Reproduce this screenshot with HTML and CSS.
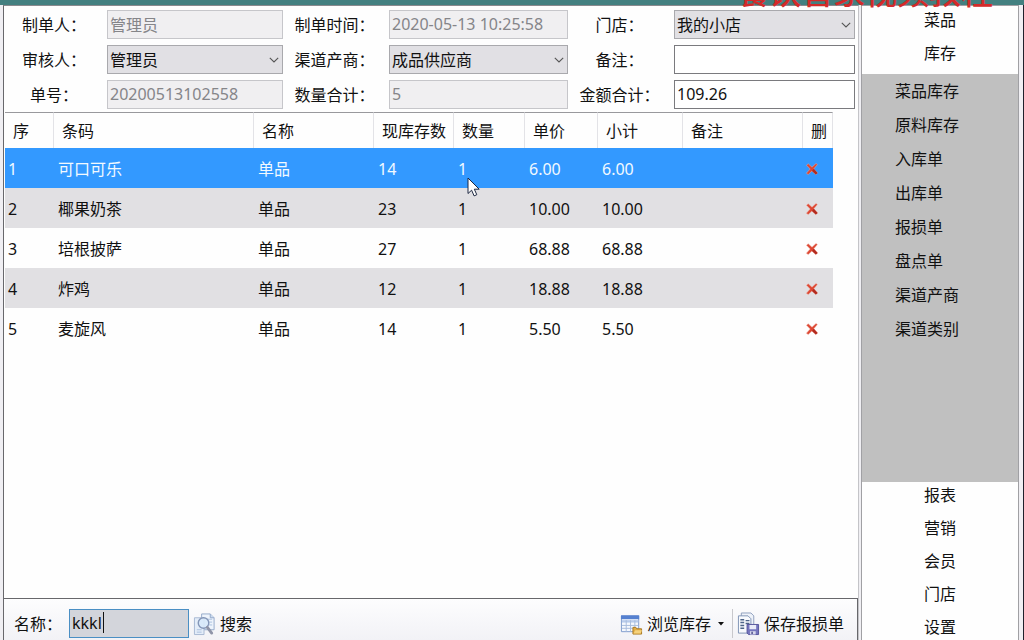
FILE: index.html
```html
<!DOCTYPE html>
<html lang="zh-CN">
<head>
<meta charset="utf-8">
<meta name="viewport" content="width=device-width, initial-scale=1">
<title>报损单</title>
<link rel="stylesheet" href="styles.css">
</head>
<body>
<svg class="defs" aria-hidden="true">
  <symbol id="cross" viewBox="0 0 14 14">
    <path d="M1.5 3.2 3.2 1.8 7 5.2 11 1.5 12.4 2.6 8.8 6.8 12.6 11 10.8 12.6 7 9 3.2 12.5 1.4 11.2 5.2 7Z" fill="#dc4632" stroke="#f0a89a" stroke-width=".5"/>
    <path d="M8.8 6.8 12.6 11 10.8 12.6 7 9Z" fill="#b32c20"/>
  </symbol>
  <symbol id="chevron" viewBox="0 0 10 6">
    <path d="M.8.8 5 5 9.2.8" fill="none" stroke="#555" stroke-width="1.1"/>
  </symbol>
</svg>
<div class="app">
  <header class="titlebar"><span class="watermark">餐饮管家视频教程</span></header>
  <div class="body">
    <main class="workspace">
      <form class="form">
        <label for="maker">制单人：</label>
        <input class="field" id="maker" value="管理员" disabled>
        <label for="time">制单时间：</label>
        <input class="field" id="time" value="2020-05-13 10:25:58" disabled>
        <label for="store">门店：</label>
        <div class="select"><select class="field" id="store"><option>我的小店</option></select><svg class="chevron"><use href="#chevron"/></svg></div>

        <label for="auditor">审核人：</label>
        <div class="select"><select class="field" id="auditor"><option>管理员</option></select><svg class="chevron"><use href="#chevron"/></svg></div>
        <label for="supplier">渠道产商：</label>
        <div class="select"><select class="field" id="supplier"><option>成品供应商</option></select><svg class="chevron"><use href="#chevron"/></svg></div>
        <label for="remark">备注：</label>
        <input class="field" id="remark">

        <label for="number">单号：</label>
        <input class="field" id="number" value="20200513102558" disabled>
        <label for="count">数量合计：</label>
        <input class="field" id="count" value="5" disabled>
        <label for="amount">金额合计：</label>
        <input class="field" id="amount" value="109.26">
      </form>

      <div class="list">
        <table class="grid">
          <colgroup><col class="c-no"><col class="c-code"><col class="c-name"><col class="c-stock"><col class="c-qty"><col class="c-price"><col class="c-sum"><col class="c-note"><col class="c-del"></colgroup>
          <thead><tr><th>序</th><th>条码</th><th>名称</th><th>现库存数</th><th>数量</th><th>单价</th><th>小计</th><th>备注</th><th>删</th></tr></thead>
          <tbody>
            <tr class="selected"><td>1</td><td>可口可乐</td><td>单品</td><td>14</td><td>1</td><td>6.00</td><td>6.00</td><td></td><td><button class="del" aria-label="删除"><svg><use href="#cross"/></svg></button></td></tr>
            <tr><td>2</td><td>椰果奶茶</td><td>单品</td><td>23</td><td>1</td><td>10.00</td><td>10.00</td><td></td><td><button class="del" aria-label="删除"><svg><use href="#cross"/></svg></button></td></tr>
            <tr><td>3</td><td>培根披萨</td><td>单品</td><td>27</td><td>1</td><td>68.88</td><td>68.88</td><td></td><td><button class="del" aria-label="删除"><svg><use href="#cross"/></svg></button></td></tr>
            <tr><td>4</td><td>炸鸡</td><td>单品</td><td>12</td><td>1</td><td>18.88</td><td>18.88</td><td></td><td><button class="del" aria-label="删除"><svg><use href="#cross"/></svg></button></td></tr>
            <tr><td>5</td><td>麦旋风</td><td>单品</td><td>14</td><td>1</td><td>5.50</td><td>5.50</td><td></td><td><button class="del" aria-label="删除"><svg><use href="#cross"/></svg></button></td></tr>
          </tbody>
        </table>
      </div>

      <footer class="toolbar">
        <label for="search">名称：</label>
        <div class="search"><input id="search" value="kkkl"><span class="caret"></span></div>
        <button class="tool">
          <svg class="icon" viewBox="0 0 24 24">
            <path d="M9 1.5h9l4 4V18H9Z" fill="#eef4fc" stroke="#93a9ca"/>
            <path d="M18 1.5v4h4" fill="#cddcf0" stroke="#93a9ca"/>
            <path d="M1.5 5.500h10V23H1.500Z" fill="#e3ecf8" stroke="#a7b8d2"/>
            <path d="M4 18h5M4 20.500h5M15 7h5M17 10h3M17 13h3" stroke="#a9bfdf"/>
            <circle cx="11" cy="11" r="5.500" fill="#d7e9fa" fill-opacity=".9" stroke="#8496b8" stroke-width="1.500"/>
            <path d="m15 15.500 4.500 6" stroke="#8f94a8" stroke-width="3" stroke-linecap="round"/>
          </svg>
          <span>搜索</span>
        </button>
        <span class="spacer"></span>
        <button class="tool">
          <svg class="icon" viewBox="0 0 24 24">
            <path d="M1.500 3.500h18V20h-18Z" fill="#f5f8fd" stroke="#7f9bcc"/>
            <path d="M1 3h19v4H1Z" fill="#5580d0"/>
            <path d="M2 8h17v2.500H2Z" fill="#b7cbeb"/>
            <path d="M2 13.500h17M2 16.500h17M6.500 8v12M11 8v12M15.500 8v12" stroke="#a8bcdc"/>
            <path d="M13.500 22.500v-7h3l1 1.500h5v5.500Z" fill="#e2ad45" stroke="#a87822"/>
            <path d="m14 22 2-3.500h7L21.500 22Z" fill="#f5d27d"/>
          </svg>
          <span>浏览库存</span>
          <svg class="arrow" viewBox="0 0 6 4"><path d="M0 0h6L3 3.500Z" fill="#111"/></svg>
        </button>
        <span class="divider"></span>
        <button class="tool">
          <svg class="icon" viewBox="0 0 24 24">
            <path d="M4.500.500h10l3 3V18h-13Z" fill="#eef2f9" stroke="#8d9ebc"/>
            <path d="M1.500 3.500h10l3 3V21.500h-13Z" fill="#f7f9fd" stroke="#7f93b5"/>
            <path d="M3.500 7.500h4M3.500 10.500h4M3.500 13.500h4M3.500 16.500h4M9 8.500h4M9 11.500h4" stroke="#4d6488" stroke-width="1.500"/>
            <path d="M10.500 12.500h12v10.500H12l-1.500-1.500Z" fill="#7474bd" stroke="#55559c"/>
            <path d="M13 13h7v4.500h-7Z" fill="#e9ebf8"/>
            <path d="M13.500 19.500h6V23h-6Z" fill="#d6d7ec"/>
            <path d="M15 20h1.500v2.500H15Z" fill="#4b4b8a"/>
          </svg>
          <span>保存报损单</span>
        </button>
      </footer>
    </main>

    <nav class="sidebar">
      <div class="group top"><button>菜品</button><button>库存</button></div>
      <div class="submenu">
        <button>菜品库存</button><button>原料库存</button><button>入库单</button><button>出库单</button><button>报损单</button><button>盘点单</button><button>渠道产商</button><button>渠道类别</button>
      </div>
      <div class="group bottom"><button>报表</button><button>营销</button><button>会员</button><button>门店</button><button>设置</button></div>
    </nav>
  </div>
  <svg class="cursor" viewBox="0 0 13 20"><path d="M1 1v15.500l3.600-3.300 2.500 5.700 2.700-1.200-2.500-5.500h4.900Z" fill="#fff" stroke="#1c2740"/></svg>
</div>
</body>
</html>
```
FILE: styles.css
```css
* {
  box-sizing: border-box;
}

body {
  margin: 0;
  background: #fefefe;
  color: #111;
}

body,
button,
input,
select {
  font-family: "Noto Sans", "Noto Sans CJK SC", sans-serif;
  font-size: 16px;
  line-height: 24px;
}

button {
  padding: 0;
  border: 0;
  background: none;
  color: inherit;
}

.defs {
  position: absolute;
  width: 0;
  height: 0;
}

.app {
  position: relative;
  display: flex;
  flex-direction: column;
  height: 100vh;
  overflow: hidden;
}

.titlebar {
  position: relative;
  flex: none;
  height: 5px;
  background: #438080;
}

.watermark {
  position: absolute;
  z-index: 1;
  right: 31px;
  bottom: -1px;
  color: #d42a2a;
  font-family: "Noto Sans CJK SC", sans-serif;
  font-size: 32px;
  font-weight: 500;
  line-height: 32px;
  white-space: nowrap;
}

.body {
  display: flex;
  flex: 1;
  min-height: 0;
  padding-left: 3px;
  border-right: 1px solid #20202c;
  background: #f0eff3;
}

/* Document area */

.workspace {
  display: flex;
  flex: 1;
  flex-direction: column;
  min-width: 0;
  border: 1px solid #8a8a8e;
  border-width: 1px 1px 0;
  border-left-color: #68686c;
  border-right-color: #c4c4c8;
  background: #fefefe;
}

.form {
  display: grid;
  grid-template-columns: 103px 176fr 106px 179fr 106px 181fr;
  row-gap: 6px;
  align-items: center;
  padding: 4px 3px 3px 0;
}

.form label {
  padding-right: 3px;
  text-align: center;
  white-space: nowrap;
}

.field {
  display: block;
  width: 100%;
  min-width: 0;
  height: 29px;
  padding: 0 2px 2px;
  border: 1px solid #7a7a7e;
  border-radius: 0;
  background: #fff;
  color: #111;
}

.field:disabled {
  border-color: #c6c6ca;
  background: #f0eff1;
  color: #858589;
}

.select {
  position: relative;
}

.select .field {
  padding: 0 20px 0 2px;
  border-color: #a9a9ad;
  background: #e1e0e4;
  appearance: none;
}

.chevron {
  position: absolute;
  top: 12px;
  right: 4px;
  width: 10px;
  height: 6px;
  pointer-events: none;
}

.list {
  flex: 1;
  min-height: 0;
  padding-left: 1px;
}

.grid {
  width: 828px;
  border-collapse: separate;
  border-spacing: 0;
  table-layout: fixed;
}

.c-no { width: 49px; }
.c-code { width: 200px; }
.c-name { width: 120px; }
.c-stock { width: 80px; }
.c-qty { width: 71px; }
.c-price { width: 73px; }
.c-sum { width: 85px; }
.c-note { width: 120px; }
.c-del { width: 30px; }

.grid th {
  height: 36px;
  padding: 0 0 0 8px;
  border-top: 1px solid #99999d;
  border-right: 1px solid #e3e3e7;
  font-weight: 400;
  text-align: left;
  white-space: nowrap;
}

.grid td {
  height: 40px;
  padding: 2px 0 0 4px;
}

.grid td:first-child {
  padding-left: 3px;
}

.grid td:last-child {
  padding-left: 2px;
}

.grid tbody tr:nth-child(even) {
  background: #e1e0e3;
}

.grid tbody .selected {
  background: #3399ff;
  color: #f2f9ff;
}

.del,
.del svg {
  display: block;
  width: 14px;
  height: 14px;
}

.toolbar {
  display: flex;
  flex: none;
  align-items: center;
  height: 42px;
  padding: 8px 13px 0 10px;
  border-top: 1px solid #67676b;
  border-right: 1px solid #67676b;
  background: linear-gradient(#fdfdfe, #f2f2f6);
  white-space: nowrap;
}

.search {
  position: relative;
  width: 120px;
  margin-left: 7px;
}

.search input {
  display: block;
  width: 100%;
  height: 29px;
  padding: 0 2px 2px;
  border: 1px solid #4a8fc4;
  border-radius: 0;
  background: #d3d5db;
  color: #111;
}

.caret {
  position: absolute;
  top: 3px;
  left: 34px;
  width: 1px;
  height: 21px;
  background: #111;
}

.tool {
  display: flex;
  gap: 4px;
  align-items: center;
  margin-left: 4px;
}

.icon {
  width: 23px;
  height: 24px;
}

.arrow {
  width: 6px;
  height: 4px;
  margin-left: 3px;
}

.spacer {
  flex: 1;
}

.divider {
  width: 1px;
  height: 29px;
  margin-left: 8px;
  background: #c8c8cc;
}

/* Module menu */

.sidebar {
  display: flex;
  flex: none;
  flex-direction: column;
  width: 158px;
  margin: 0 4px 0 2px;
  border: 1px solid #a0a0a4;
  border-bottom: 0;
  background: #fefefe;
}

.group {
  display: flex;
  flex-direction: column;
  gap: 9px;
}

.top {
  padding: 2px 0 9px;
}

.bottom {
  padding: 1px 0;
}

.submenu {
  display: flex;
  flex: 1;
  flex-direction: column;
  min-height: 0;
  padding-left: 33px;
  background: #c0c0c0;
}

.submenu button {
  line-height: 34px;
  text-align: left;
}

/* Mouse pointer */

.cursor {
  position: absolute;
  top: 177px;
  left: 467px;
  width: 13px;
  height: 20px;
}
```
